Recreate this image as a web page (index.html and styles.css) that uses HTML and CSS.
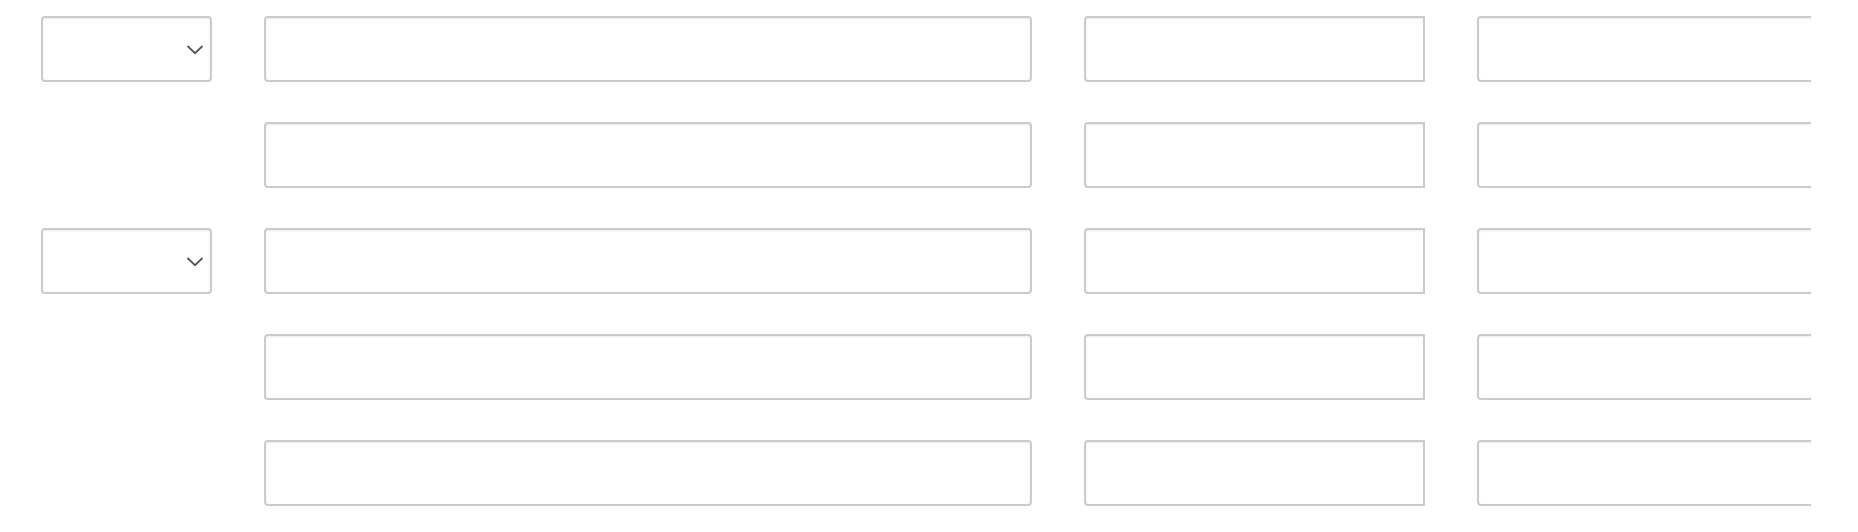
FILE: index.html
```html
<!DOCTYPE html>
<html>
<head>
<meta charset="utf-8">
<link rel="stylesheet" href="styles.css">
</head>
<body>
<div class="viewport">
  <div class="grid">
    <div class="select"><svg class="chev" width="18" height="11" viewBox="0 0 18 11"><path d="M1.5 2 L9 9.2 L16.5 2" fill="none" stroke="#555" stroke-width="1.8"/></svg></div>
    <div class="field"></div>
    <div class="field sq"></div>
    <div class="field"></div>

    <div class="empty"></div>
    <div class="field"></div>
    <div class="field sq"></div>
    <div class="field"></div>

    <div class="select"><svg class="chev" width="18" height="11" viewBox="0 0 18 11"><path d="M1.5 2 L9 9.2 L16.5 2" fill="none" stroke="#555" stroke-width="1.8"/></svg></div>
    <div class="field"></div>
    <div class="field sq"></div>
    <div class="field"></div>

    <div class="empty"></div>
    <div class="field"></div>
    <div class="field sq"></div>
    <div class="field"></div>

    <div class="empty"></div>
    <div class="field"></div>
    <div class="field sq"></div>
    <div class="field"></div>
  </div>
</div>
</body>
</html>
```
FILE: styles.css
```css
html, body {
  margin: 0;
  padding: 0;
  background: #fff;
  font-family: "Liberation Sans", Arial, sans-serif;
}
.viewport {
  width: 1811px;
  overflow: hidden;
  padding-top: 16px;
}
.grid {
  display: grid;
  grid-template-columns: 171px 768px 341px 341px;
  grid-auto-rows: 66px;
  column-gap: 52px;
  row-gap: 40px;
  margin-left: 41px;
  width: max-content;
}
.field, .select {
  box-sizing: border-box;
  border: 2px solid #cbcbcb;
  border-radius: 4px;
  background: #fff;
  box-shadow: inset 0 1px 2px rgba(0,0,0,0.08);
}
.field.sq {
  border-radius: 4px 0 0 4px;
}
.select {
  display: flex;
  align-items: center;
  justify-content: flex-end;
  padding-right: 6px;
}
.chev {
  display: block;
}
```
